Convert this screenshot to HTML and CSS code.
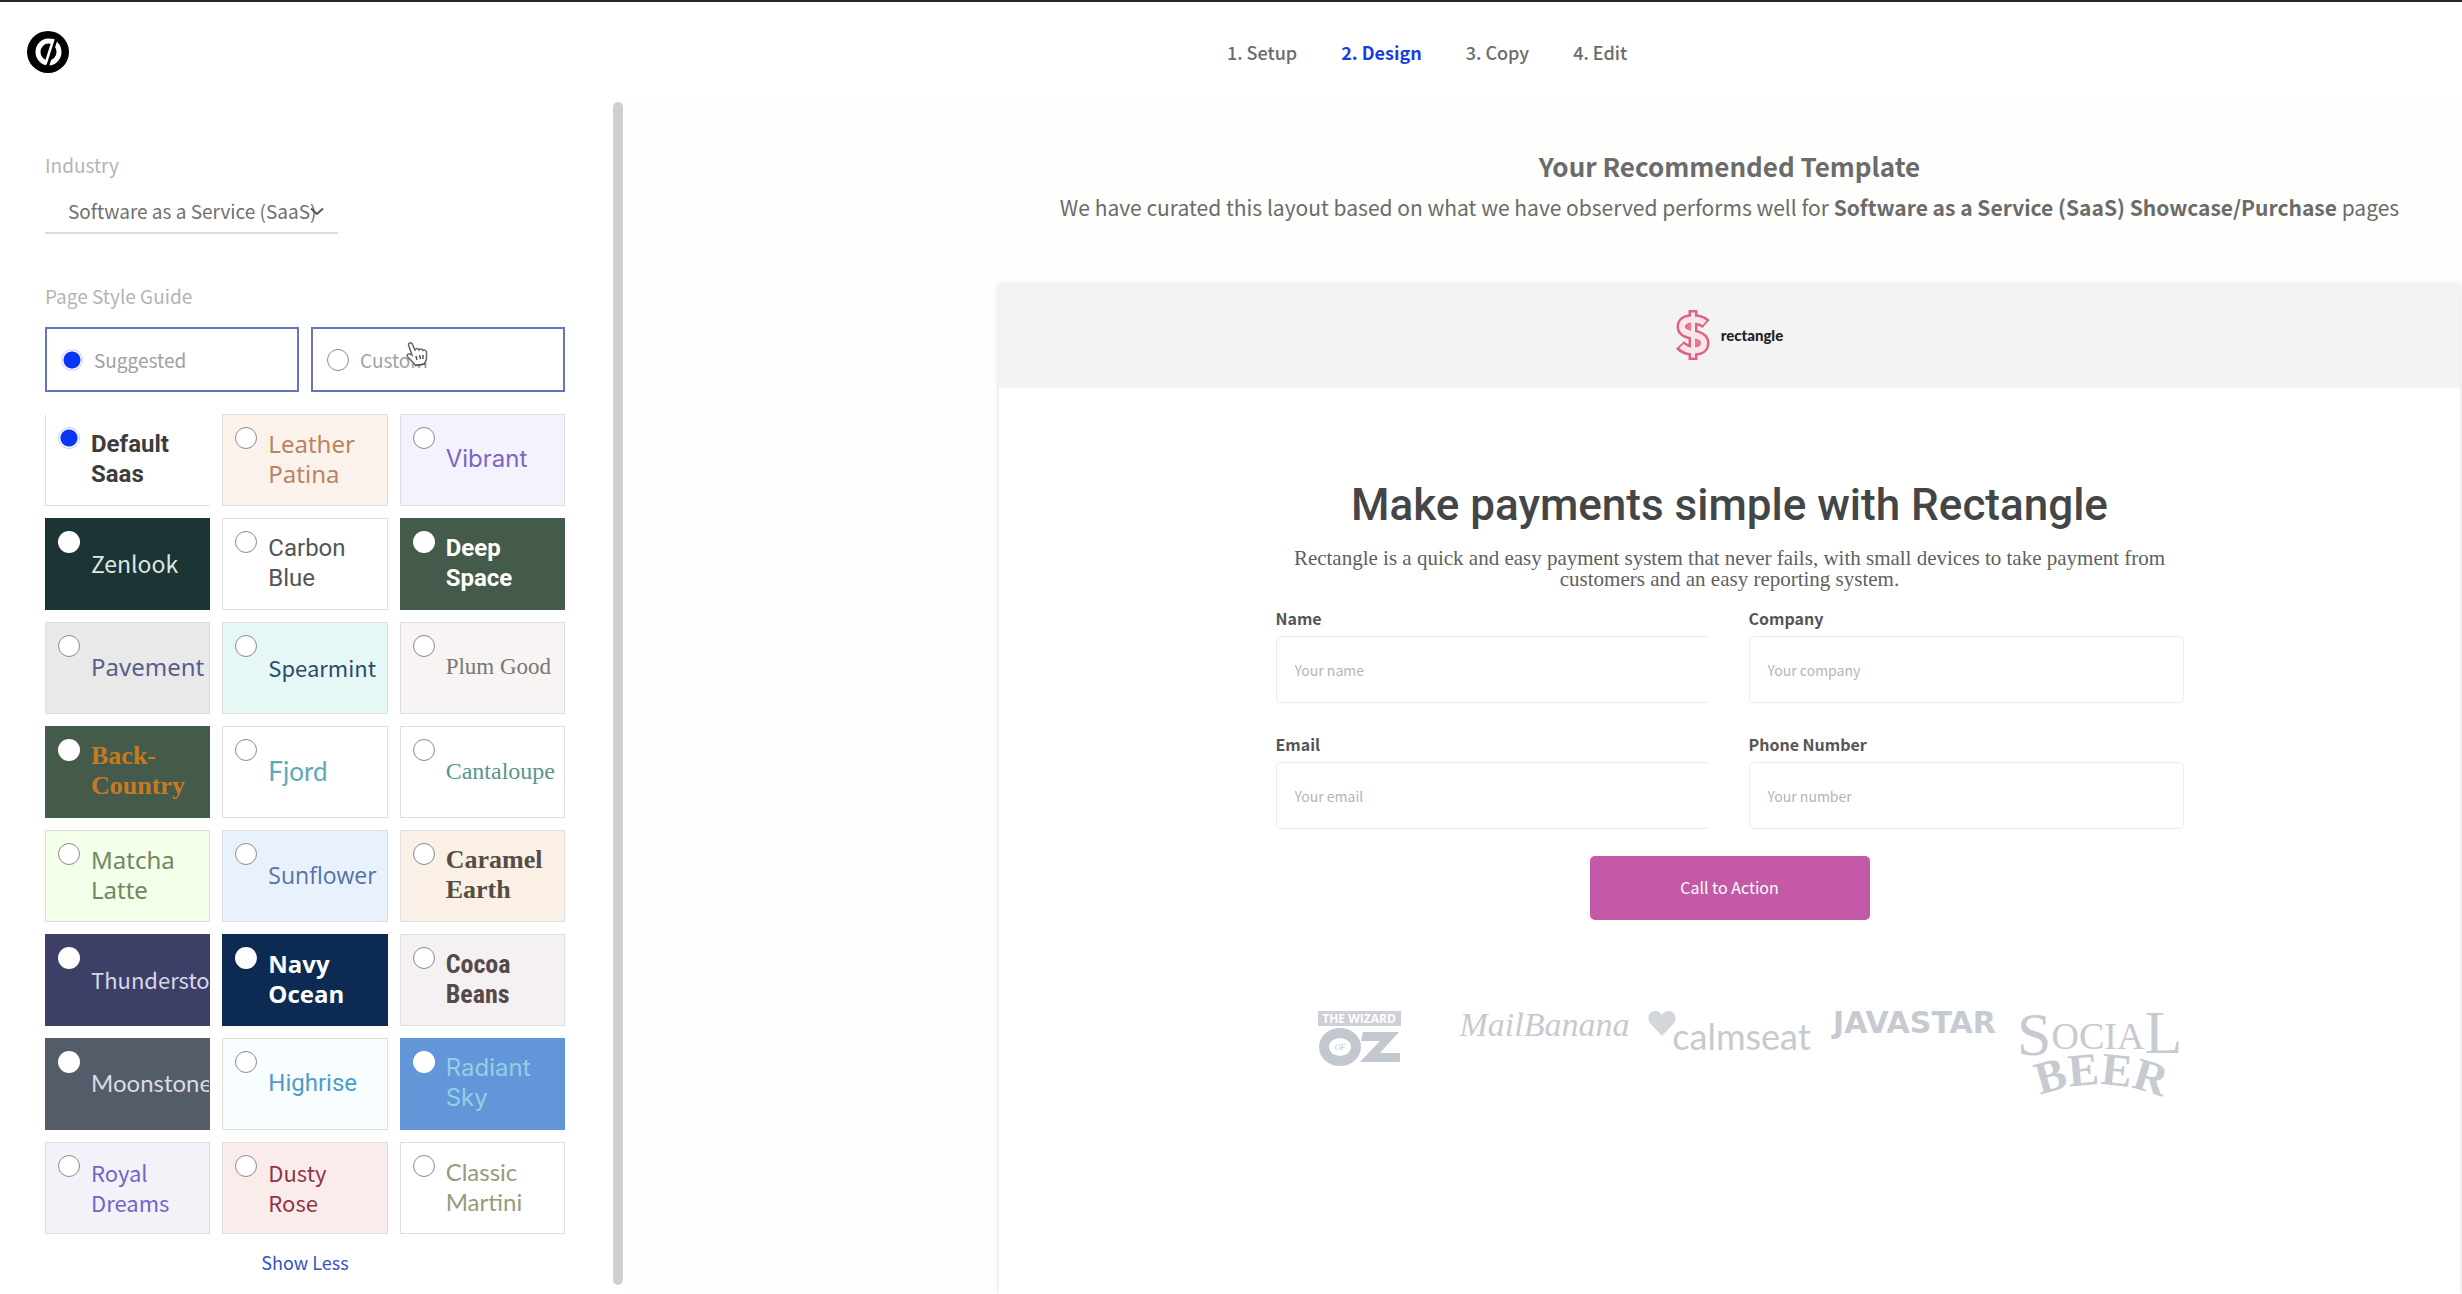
FILE: index.html
```html
<!DOCTYPE html>
<html lang="en">
<head>
<meta charset="utf-8">
<meta name="viewport" content="width=device-width, initial-scale=1">
<title>Design</title>
<link rel="stylesheet" href="styles.css">
</head>
<body>
<header class="topbar">
  <a class="brand" href="#" aria-label="Home">
    <svg viewBox="0 0 42 42" width="42" height="42" aria-hidden="true">
      <circle cx="21" cy="21" r="21" fill="#000"/>
      <ellipse cx="21.500" cy="21" rx="10.500" ry="11" fill="none" stroke="#fff" stroke-width="5"/>
      <path d="M29.500 6L19.500 38" stroke="#000" stroke-width="3.500" fill="none"/>
      <path d="M26.500 8L18.500 33" stroke="#fff" stroke-width="2.500" fill="none"/>
    </svg>
  </a>
  <nav class="steps">
    <a href="#">1. Setup</a>
    <a href="#" class="current">2. Design</a>
    <a href="#">3. Copy</a>
    <a href="#">4. Edit</a>
  </nav>
</header>
<div class="workspace">
  <aside class="sidebar">
    <form class="options">
      <label class="caption" for="industry">Industry</label>
      <div class="select-wrap">
        <select id="industry"><option>Software as a Service (SaaS)</option></select>
        <svg class="chevron" viewBox="0 0 14 9" width="14" height="9" aria-hidden="true"><path d="M1 1.500L7 7L13 1.500" fill="none" stroke="#555" stroke-width="2"/></svg>
      </div>
      <p class="caption">Page Style Guide</p>
      <div class="modes">
        <label class="mode"><input type="radio" name="mode" checked>Suggested</label>
        <label class="mode"><input type="radio" name="mode">Custom
          <svg class="cursor" viewBox="0 0 24 26" width="24" height="26" aria-hidden="true"><path d="M8 14L4.500 4a2 2 0 0 1 3.500-1.500L11 9c1-2 3-2 4 0c1-1.500 3-1.500 4 .5c1-1 3-.5 3.500 1.500V17c0 3-2 4-2 6l-9 1.500C10 21 4 18 3 14.500c0-2 3-2 5-.5Z" fill="#fff" stroke="#666" stroke-width="1.500"/><path d="M12 15l1 4M15.500 14l1 4M19 14v4M11 24.500l10-1.500" stroke="#555" stroke-width="1.500"/></svg>
        </label>
      </div>
      <div class="swatches">
        <label class="swatch default-saas"><input type="radio" name="style" checked><span>Default Saas</span></label>
        <label class="swatch leather"><input type="radio" name="style"><span>Leather Patina</span></label>
        <label class="swatch vibrant"><input type="radio" name="style"><span>Vibrant</span></label>
        <label class="swatch dark zenlook"><input type="radio" name="style"><span>Zenlook</span></label>
        <label class="swatch carbon"><input type="radio" name="style"><span>Carbon Blue</span></label>
        <label class="swatch dark deep"><input type="radio" name="style"><span>Deep<br>Space</span></label>
        <label class="swatch pavement"><input type="radio" name="style"><span>Pavement</span></label>
        <label class="swatch spearmint"><input type="radio" name="style"><span>Spearmint</span></label>
        <label class="swatch plum"><input type="radio" name="style"><span>Plum Good</span></label>
        <label class="swatch dark back"><input type="radio" name="style"><span>Back-Country</span></label>
        <label class="swatch fjord"><input type="radio" name="style"><span>Fjord</span></label>
        <label class="swatch cantaloupe"><input type="radio" name="style"><span>Cantaloupe</span></label>
        <label class="swatch matcha"><input type="radio" name="style"><span>Matcha Latte</span></label>
        <label class="swatch sunflower"><input type="radio" name="style"><span>Sunflower</span></label>
        <label class="swatch caramel"><input type="radio" name="style"><span>Caramel Earth</span></label>
        <label class="swatch dark thunder"><input type="radio" name="style"><span>Thunderstorm</span></label>
        <label class="swatch dark navy"><input type="radio" name="style"><span>Navy Ocean</span></label>
        <label class="swatch cocoa"><input type="radio" name="style"><span>Cocoa<br>Beans</span></label>
        <label class="swatch dark moonstone"><input type="radio" name="style"><span>Moonstone</span></label>
        <label class="swatch highrise"><input type="radio" name="style"><span>Highrise</span></label>
        <label class="swatch dark radiant"><input type="radio" name="style"><span>Radiant Sky</span></label>
        <label class="swatch royal"><input type="radio" name="style"><span>Royal Dreams</span></label>
        <label class="swatch dusty"><input type="radio" name="style"><span>Dusty<br>Rose</span></label>
        <label class="swatch martini"><input type="radio" name="style"><span>Classic Martini</span></label>
      </div>
      <button type="button" class="show-less">Show Less</button>
    </form>
    <div class="scrollbar"></div>
  </aside>
  <main class="stage">
    <h2 class="stage-title">Your Recommended Template</h2>
    <p class="stage-note">We have curated this layout based on what we have observed performs well for <strong>Software as a Service (SaaS) Showcase/Purchase</strong> pages</p>
    <article class="preview">
      <header class="preview-head">
        <svg viewBox="0 0 34 52" width="34" height="52" aria-hidden="true">
          <g fill="none" stroke="#dc6482">
            <path d="M17 1V51" stroke-width="9"/>
            <path d="M30 15Q25 10.500 17 10.500C10 10.500 6 13 6 18C6 28 28 23 28 34C28 39 24 41.500 17 41.500Q9 41.500 4 36" stroke-width="11"/>
          </g>
          <path d="M11 15h6v8c-4-1-6-2-6-5ZM17 29c5 1 7 3 7 5s-3 4-7 4Z" fill="#e87892"/>
          <g fill="none" stroke="#f8e6ea">
            <path d="M17 3.500V48.500" stroke-width="4"/>
            <path d="M28.500 14Q24 10.500 17 10.500C10 10.500 6 13 6 18C6 28 28 23 28 34C28 39 24 41.500 17 41.500Q10 41.500 5.500 37" stroke-width="6"/>
          </g>
        </svg>
        <span>rectangle</span>
      </header>
      <form class="pitch">
        <h1>Make payments simple with Rectangle</h1>
        <p>Rectangle is a quick and easy payment system that never fails, with small devices to take payment from customers and an easy reporting system.</p>
        <div class="fields">
          <div class="field open"><label for="name">Name</label><input id="name" type="text" placeholder="Your name"></div>
          <div class="field"><label for="company">Company</label><input id="company" type="text" placeholder="Your company"></div>
          <div class="field open"><label for="email">Email</label><input id="email" type="email" placeholder="Your email"></div>
          <div class="field"><label for="phone">Phone Number</label><input id="phone" type="tel" placeholder="Your number"></div>
        </div>
        <button type="button" class="cta">Call to Action</button>
      </form>
      <div class="logos">
        <div class="logo oz">
          <svg viewBox="0 0 83 56" width="83" height="56" role="img" aria-label="The Wizard of Oz">
            <rect width="83" height="15" fill="#cdd0d6"/>
            <text x="41" y="12" class="oz-top">THE WIZARD</text>
            <ellipse cx="22" cy="36" rx="16" ry="14" fill="none" stroke="#c3c7d0" stroke-width="10"/>
            <text x="22" y="39" class="oz-of">OF</text>
            <path d="M45 21H81L62 42H82V51H42L62 30H43Z" fill="#c3c7d0"/>
          </svg>
        </div>
        <div class="logo mail">MailBanana</div>
        <div class="logo calm">
          <svg viewBox="0 0 28 25" width="28" height="25" aria-hidden="true"><path d="M14 25L2 12C-2 6 2 0 7 0c4 0 6 2 7 4c1-2 3-4 7-4c5 0 9 6 5 12Z" fill="#d3d6da"/></svg>
          <span>calmseat</span>
        </div>
        <div class="logo java">JAVASTAR</div>
        <div class="logo social">
          <svg viewBox="0 0 166 88" width="166" height="88" role="img" aria-label="Social Beer">
            <defs><path id="arc" d="M14 88Q83 58 154 90"/></defs>
            <text x="0" y="44" class="serif"><tspan class="xl">S</tspan><tspan class="md" y="38">OCIA</tspan><tspan class="xl" y="42">L</tspan></text>
            <text class="serif beer"><textPath href="#arc" startOffset="50%" text-anchor="middle">BEER</textPath></text>
          </svg>
        </div>
      </div>
    </article>
  </main>
</div>
</body>
</html>
```
FILE: styles.css
```css
* { box-sizing: border-box; }

body {
  margin: 0;
  min-height: 100vh;
  display: flex;
  flex-direction: column;
  background: #fff;
  color: #6b6b6b;
  font: 18px/28px "Noto Sans CJK SC", "Noto Sans", sans-serif;
}

h1, h2, p { margin: 0; }
a { color: inherit; text-decoration: none; }
svg { display: block; flex: none; overflow: visible; }

.topbar {
  display: grid;
  grid-template-columns: 1fr auto 1fr;
  align-items: center;
  height: 102px;
  padding: 0 27px;
  border-top: 2px solid #2b2529;
}
.steps {
  display: flex;
  gap: 44px;
  padding-left: 392px;
  font-weight: 500;
}
.steps .current { color: #1a3fd8; font-weight: 700; }

.workspace { flex: 1; display: flex; }

.sidebar {
  flex: none;
  width: 625px;
  display: flex;
  justify-content: space-between;
  padding: 0 2px 0 45px;
}
.options { width: 520px; padding-top: 49px; }
.scrollbar {
  width: 10px;
  margin-bottom: 9px;
  border-radius: 5px;
  background: #cfcfcf;
}
.caption { display: block; color: #b4b4b4; font-size: 19px; }

.select-wrap {
  display: flex;
  align-items: center;
  width: 293px;
  height: 44px;
  margin: 11px 0 48px;
  border-bottom: 2px solid #dcdcdc;
}
.select-wrap select {
  appearance: none;
  flex: 1;
  margin-right: -14px;
  padding: 0 0 0 23px;
  border: 0;
  background: none;
  color: #707070;
  font: inherit;
  font-size: 19px;
}
.chevron { margin-right: 14px; }

.modes {
  display: grid;
  grid-template-columns: 1fr 1fr;
  gap: 12px;
  margin: 17px 0 22px;
}
.mode {
  position: relative;
  display: flex;
  align-items: center;
  gap: 11px;
  height: 65px;
  padding: 0 14px;
  border: 2px solid #6474bd;
  color: #a0a0a0;
  font-size: 19px;
}
.cursor { position: absolute; left: 91px; top: 12px; }

input[type="radio"] {
  appearance: none;
  flex: none;
  width: 22px;
  height: 22px;
  margin: 0;
  border: 1px solid #8a8a8a;
  border-radius: 50%;
  background: #fff;
}
input[type="radio"]:checked {
  border-color: #c5d0ff;
  background: radial-gradient(circle, #0a35f5 8px, #fff 9px);
}

.swatches {
  display: grid;
  grid-template-columns: repeat(3, minmax(0, 1fr));
  gap: 12px;
}
.swatch {
  display: flex;
  align-items: center;
  gap: 11px;
  height: 92px;
  padding: 0 0 2px 12px;
  overflow: hidden;
  border: 1px solid #dedede;
  font-size: 22px;
  line-height: 30px;
}
.swatch input { align-self: flex-start; margin-top: 12px; }
.swatch.dark, .swatch.dark input { border-color: transparent; }

.default-saas, .leather, .vibrant, .carbon, .deep, .pavement, .cantaloupe,
.matcha, .navy, .moonstone, .highrise, .radiant, .martini { font-size: 24px; }
.back, .caramel, .fjord, .cocoa { font-size: 26px; }
.plum, .sunflower, .zenlook { font-size: 23px; }

.default-saas { color: #3d3d3d; font-family: Roboto, sans-serif; font-weight: 700; border-top-color: #fff; border-right-color: #fff; }
.leather { background: #fcf2ec; color: #bb8461; font-family: "Noto Sans", sans-serif; }
.vibrant { background: #f3f3fe; color: #8063c4; font-family: Inter, sans-serif; }
.zenlook { background: #1d3435; color: #dfe6e6; }
.carbon { color: #555; font-family: Roboto, sans-serif; }
.deep { background: #445a4b; color: #fff; font-family: Roboto, sans-serif; font-weight: 700; }
.pavement { background: #e9e9ea; color: #56608a; font-family: "Noto Sans", sans-serif; }
.spearmint { background: #e5f8f6; color: #2f4a6d; }
.plum { background: #f8f4f3; color: #777; font-family: "Liberation Serif", serif; }
.back { background: #445a4b; color: #c97a1e; font-family: "Liberation Serif", serif; font-weight: 700; }
.fjord { color: #5aa9b8; font-family: Lato, sans-serif; }
.cantaloupe { color: #58958f; font-family: "Liberation Serif", serif; }
.matcha { background: #f3ffe8; color: #71885f; font-family: "Noto Sans", sans-serif; }
.sunflower { background: #e9f1fd; color: #5572a6; font-family: "Open Sans", sans-serif; }
.caramel { background: #faf0e6; color: #574c44; font-family: "Liberation Serif", serif; font-weight: 700; }
.thunder { background: #3d3f66; color: #d6d8e6; }
.navy { background: #0d2a52; color: #fff; font-family: "Open Sans", sans-serif; font-weight: 700; }
.cocoa { background: #f5f1f2; color: #56494a; font-family: "Liberation Sans Narrow", "Roboto Condensed", Roboto, sans-serif; font-weight: 700; }
.moonstone { background: #545b69; color: #dadce2; font-family: Lato, sans-serif; }
.highrise { background: #f8feff; color: #4f9bc9; font-family: Roboto, sans-serif; }
.radiant { background: #6396d8; color: #8fd0e4; font-family: Inter, sans-serif; }
.royal { background: #f5f1f8; color: #7065c9; }
.dusty { background: #fbecec; color: #8d3546; }
.martini { color: #959b7b; font-family: Lato, sans-serif; }

.show-less {
  display: block;
  margin: 14px auto 0;
  padding: 0;
  border: 0;
  background: none;
  color: #3154c4;
  font: inherit;
}

.stage {
  flex: 1;
  min-width: 0;
  display: flex;
  flex-direction: column;
  padding: 44px 2px 0 374px;
  background: #fefefc;
  text-align: center;
}
.stage-title { font-size: 26px; line-height: 40px; font-weight: 700; }
.stage-note { padding-top: 5px; font-size: 21px; line-height: 32px; }

.preview {
  flex: 1;
  margin-top: 62px;
  background: #fff;
  box-shadow: 0 0 6px #ddd;
}
.preview-head {
  display: flex;
  justify-content: center;
  align-items: center;
  gap: 11px;
  height: 103px;
  padding-bottom: 4px;
  background: #f3f3f3;
  color: #222;
  font: 900 15px/20px Lato, sans-serif;
}
.pitch { width: 908px; margin: 0 auto; padding-top: 87px; }
.pitch h1 { color: #444547; font: 500 44px/60px Roboto, sans-serif; }
.pitch p {
  padding: 13px 12px 0;
  color: #5f5f5f;
  font: 21px/21px "Liberation Serif", serif;
}
.fields {
  display: grid;
  grid-template-columns: 1fr 1fr;
  gap: 29px 38px;
  padding-top: 16px;
}
.field { text-align: left; color: #555; font-weight: 700; font-size: 16px; line-height: 24px; }
.field label { display: block; margin-bottom: 6px; }
.field input {
  display: block;
  width: 100%;
  height: 67px;
  padding: 0 18px;
  border: 1px solid #ececec;
  border-radius: 5px;
  background: #fff;
  font: 14px/20px "Noto Sans CJK SC", sans-serif;
}
.field.open input { border-right-color: transparent; }
.field input::placeholder { color: #b5b5b5; opacity: 1; }
.cta {
  width: 280px;
  height: 64px;
  margin-top: 27px;
  padding-bottom: 3px;
  border: 0;
  border-radius: 5px;
  background: #c459a8;
  color: #fff;
  font: 16px/24px "Noto Sans CJK SC", sans-serif;
}

.logos {
  display: grid;
  grid-template-columns: repeat(5, 166px);
  gap: 19px;
  justify-content: center;
  margin-top: 91px;
  color: #c6cad1;
}
.logo { display: flex; align-items: flex-start; justify-content: center; }
.mail { font: italic 34px/28px "Liberation Serif", serif; white-space: nowrap; }
.calm span { margin: 8px 0 0 -4px; font: 36px/34px Lato, sans-serif; }
.java { font: 700 30px/24px "DejaVu Sans", sans-serif; }
.oz-top { font: 700 12px "Open Sans", sans-serif; fill: #fff; text-anchor: middle; }
.oz-of { font: italic 8px "Liberation Serif", serif; fill: #c3c7d0; text-anchor: middle; }
.serif { font-family: "Liberation Serif", serif; fill: #c6cad1; }
.xl { font-size: 62px; }
.md { font-size: 38px; }
.beer { font-size: 46px; font-weight: 700; }
```
